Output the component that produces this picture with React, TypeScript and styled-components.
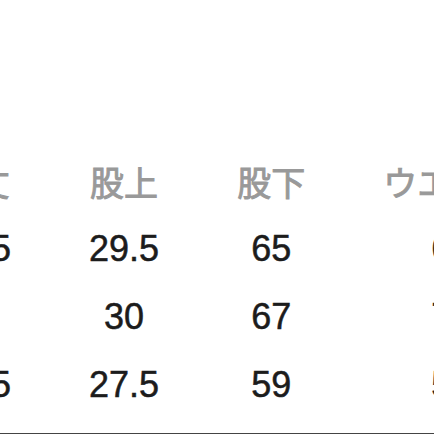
import React from "react";
import styled, { createGlobalStyle } from "styled-components";

const GlobalStyle = createGlobalStyle`
  html, body {
    margin: 0;
    padding: 0;
    background: #fff;
    overflow: hidden;
  }
`;

const Page = styled.div`
  width: 434px;
  height: 434px;
  overflow: hidden;
  padding-top: 147px;
  box-sizing: border-box;
  font-family: "Liberation Sans", "Noto Sans CJK JP", sans-serif;
`;

// the size chart is wider than the view, so it starts left of the edge
const SizeTable = styled.table`
  border-collapse: collapse;
  margin-left: -98px;
  white-space: nowrap;
`;

const HeadCell = styled.th`
  height: 68px;
  padding: 0 39px;
  font-family: "Noto Sans CJK JP", sans-serif;
  font-size: 34px;
  font-weight: 400;
  color: #999;
  -webkit-text-stroke: 0.9px #999;
  text-align: center;
  vertical-align: middle;
`;

const Cell = styled.td`
  height: 68px;
  padding: 0 39px;
  font-size: 36px;
  color: #1c1c1c;
  -webkit-text-stroke: 0.5px #1c1c1c;
  text-align: center;
  vertical-align: middle;
`;

const Divider = styled.div`
  margin-top: 14px;
  width: 100%;
  height: 1px;
  background: #444;
`;

const headers = ["着丈", "股上", "股下", "ウエスト"];

const rows = [
  ["95.5", "29.5", "65", "64"],
  ["98", "30", "67", "71"],
  ["87.5", "27.5", "59", "58"],
];

const App: React.FC = () => {
  return (
    <>
      <GlobalStyle />
      <Page>
        <SizeTable>
          <thead>
            <tr>
              {headers.map((h) => (
                <HeadCell key={h}>{h}</HeadCell>
              ))}
            </tr>
          </thead>
          <tbody>
            {rows.map((row, i) => (
              <tr key={i}>
                {row.map((v, j) => (
                  <Cell key={j}>{v}</Cell>
                ))}
              </tr>
            ))}
          </tbody>
        </SizeTable>
        <Divider />
      </Page>
    </>
  );
};

export default App;
